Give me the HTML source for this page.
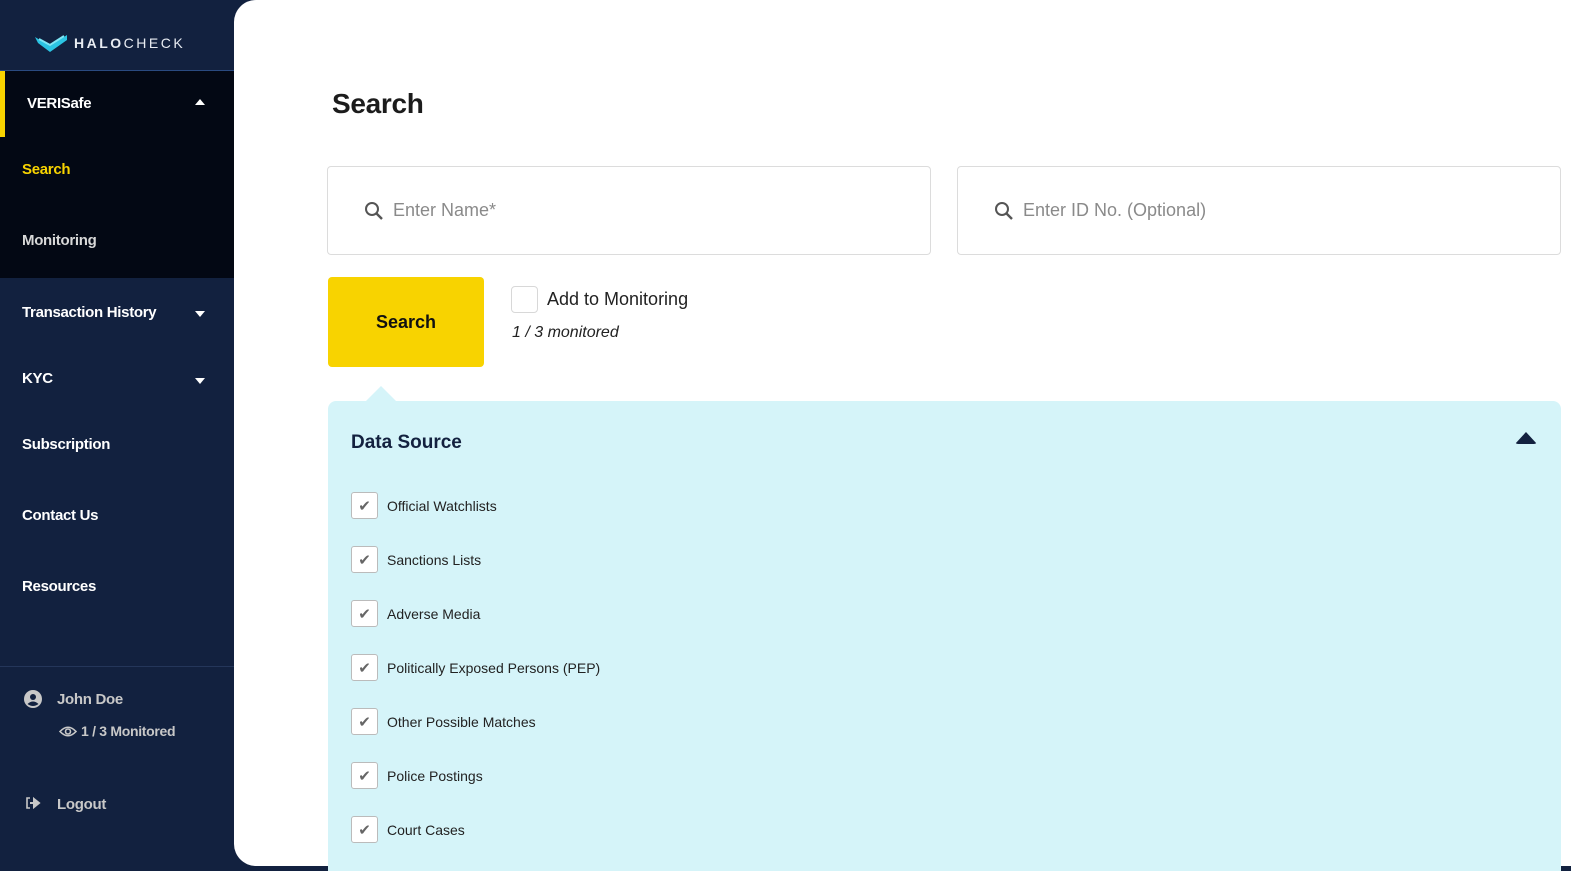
<!DOCTYPE html>
<html><head><meta charset="utf-8"><style>
*{box-sizing:border-box;margin:0;padding:0}
body{width:1571px;height:866px;overflow:hidden;background:#12213f;font-family:"Liberation Sans",Arial,sans-serif;position:relative}
.sb{position:absolute;left:0;top:0;width:234px;height:866px;background:#12213f;color:#fff}
.logo{position:absolute;left:34px;top:30px;height:26px;display:flex;align-items:center}
.logo span{font-size:14px;letter-spacing:2.5px;color:#e8ecf2;margin-left:6px}
.hr{position:absolute;left:0;width:234px;height:1px;background:#2a4a80}
.dark{position:absolute;left:0;top:71px;width:234px;height:207px;background:#030814}
.item{position:absolute;left:22px;font-size:15px;font-weight:bold;letter-spacing:-0.3px}
.caret{position:absolute;left:195px;width:0;height:0;border-left:5px solid transparent;border-right:5px solid transparent}
.main{position:absolute;left:234px;top:0;width:1337px;height:866px;background:#fff;border-radius:22px 0 0 22px}
h1{position:absolute;left:98px;top:88px;font-size:28px;font-weight:bold;color:#1c1c1c;letter-spacing:-0.3px}
.inp{position:absolute;top:166px;height:89px;border:1px solid #dcdcdc;border-radius:4px;font-size:18px;color:#8a8a8a;display:flex;align-items:center;padding-left:36px}
.inp svg{margin-right:9px}
.btn{position:absolute;left:94px;top:277px;width:156px;height:90px;background:#f8d300;border-radius:4px;font-size:18px;font-weight:bold;display:flex;align-items:center;justify-content:center;color:#111}
.cb{position:absolute;left:277px;top:286px;width:27px;height:27px;border:1px solid #d8d8d8;border-radius:4px}
.panel{position:absolute;left:94px;top:401px;width:1233px;height:470px;background:#d5f4f9;border-radius:8px 8px 0 0}
.tri{position:absolute;left:132px;top:386px;width:0;height:0;border-left:15px solid transparent;border-right:15px solid transparent;border-bottom:15px solid #d5f4f9}
.ds{position:absolute;left:23px;top:31px;font-size:19px;font-weight:bold;color:#13213f}
.row{position:absolute;left:23px;display:flex;align-items:center;font-size:14px;color:#222}
.row .b{width:27px;height:27px;border:1px solid #bbb;background:#fff;border-radius:3px;margin-right:9px;display:flex;align-items:center;justify-content:center}
</style></head><body>
<div class="sb">
 <div class="logo"><svg width="34" height="24" viewBox="0 0 34 24"><path d="M1 6 L16 15 L33 4 L33 9 L16 21 L4 12 Z" fill="#2bc4e3"/><path d="M5 8 L16 14 L30 5" stroke="#7ee6f5" stroke-width="2" fill="none"/></svg><span><b>HALO</b>CHECK</span></div>
 <div class="hr" style="top:70px"></div>
 <div class="dark"></div>
 <div style="position:absolute;left:0;top:71px;width:5px;height:66px;background:#f8d300"></div>
 <div class="item" style="left:27px;top:95px">VERISafe</div>
 <div class="caret" style="top:99px;border-bottom:6px solid #fff"></div>
 <div class="item" style="top:161px;color:#f8d300">Search</div>
 <div class="item" style="top:232px;color:#d8d8d8">Monitoring</div>
 <div class="item" style="top:304px">Transaction History</div>
 <div class="caret" style="top:311px;border-top:6px solid #fff"></div>
 <div class="item" style="top:370px">KYC</div>
 <div class="caret" style="top:378px;border-top:6px solid #fff"></div>
 <div class="item" style="top:436px">Subscription</div>
 <div class="item" style="top:507px">Contact Us</div>
 <div class="item" style="top:578px">Resources</div>
 <div class="hr" style="top:666px;background:#24365a"></div>
 <svg style="position:absolute;left:24px;top:690px" width="18" height="18" viewBox="0 0 18 18"><circle cx="9" cy="9" r="9" fill="#c8c8c8"/><circle cx="9" cy="7" r="3" fill="#12213f"/><path d="M3.5 14 Q9 9 14.5 14 Q9 18 3.5 14Z" fill="#12213f"/></svg>
 <div class="item" style="left:57px;top:691px;color:#c8c8c8">John Doe</div>
 <svg style="position:absolute;left:59px;top:725px" width="18" height="13" viewBox="0 0 18 13"><path d="M1 6.5 Q9 -2 17 6.5 Q9 15 1 6.5Z" fill="none" stroke="#c8c8c8" stroke-width="1.6"/><circle cx="9" cy="6.5" r="2.5" fill="none" stroke="#c8c8c8" stroke-width="1.6"/></svg>
 <div class="item" style="left:81px;top:723px;color:#c8c8c8;font-size:14px">1 / 3 Monitored</div>
 <svg style="position:absolute;left:25px;top:796px" width="16" height="14" viewBox="0 0 16 14"><path d="M5 2 H2 V12 H5" fill="none" stroke="#c8c8c8" stroke-width="1.6"/><path d="M5 7 H10 M9 3 L14 7 L9 11Z" stroke="#c8c8c8" stroke-width="2" fill="#c8c8c8"/></svg>
 <div class="item" style="left:57px;top:796px;color:#c8c8c8">Logout</div>
</div>
<div class="main">
 <h1>Search</h1>
 <div class="inp" style="left:93px;width:604px"><svg width="20" height="20" viewBox="0 0 20 20"><circle cx="8" cy="8" r="6" fill="none" stroke="#555" stroke-width="2"/><path d="M12.5 12.5 L18 18" stroke="#555" stroke-width="2.4"/></svg>Enter Name*</div>
 <div class="inp" style="left:723px;width:604px"><svg width="20" height="20" viewBox="0 0 20 20"><circle cx="8" cy="8" r="6" fill="none" stroke="#555" stroke-width="2"/><path d="M12.5 12.5 L18 18" stroke="#555" stroke-width="2.4"/></svg>Enter ID No. (Optional)</div>
 <div class="btn">Search</div>
 <div class="cb"></div>
 <div style="position:absolute;left:313px;top:289px;font-size:18px;color:#222">Add to Monitoring</div>
 <div style="position:absolute;left:278px;top:324px;font-size:16px;font-style:italic;color:#222">1 / 3 monitored</div>
 <div class="tri"></div>
 <div class="panel">
  <div class="ds">Data Source</div>
  <div style="position:absolute;right:24px;top:31px;width:0;height:0;border-left:11px solid transparent;border-right:11px solid transparent;border-bottom:12px solid #13213f;border-radius:3px"></div>
  <div class="row" style="top:91px"><div class="b">✔</div>Official Watchlists</div>
  <div class="row" style="top:145px"><div class="b">✔</div>Sanctions Lists</div>
  <div class="row" style="top:199px"><div class="b">✔</div>Adverse Media</div>
  <div class="row" style="top:253px"><div class="b">✔</div>Politically Exposed Persons (PEP)</div>
  <div class="row" style="top:307px"><div class="b">✔</div>Other Possible Matches</div>
  <div class="row" style="top:361px"><div class="b">✔</div>Police Postings</div>
  <div class="row" style="top:415px"><div class="b">✔</div>Court Cases</div>
 </div>
</div>
<style>.row .b{color:#666;font-size:15px}</style>
</body></html>
